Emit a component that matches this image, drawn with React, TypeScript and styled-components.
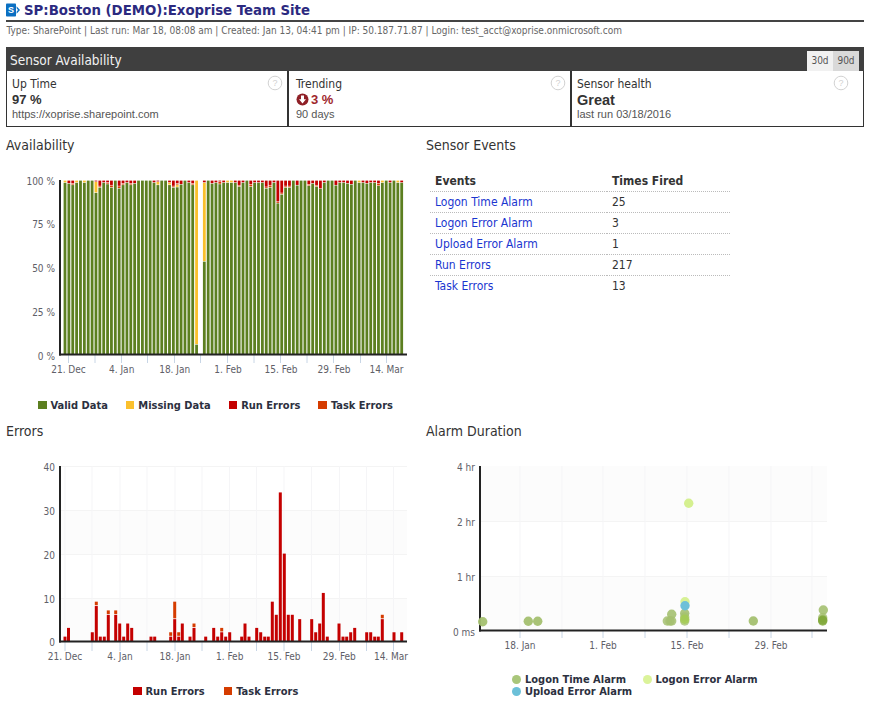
import React from "react";
import styled, { createGlobalStyle } from "styled-components";

const Global = createGlobalStyle`
  html, body { margin: 0; padding: 0; background: #fff; }
  body { font-family: "DejaVu Sans Condensed", "DejaVu Sans", Verdana, sans-serif; color: #333; }
`;
const Page = styled.div`
  width: 858px;
  margin-left: 6px;
  display: flex;
  flex-direction: column;
`;
const TitleBar = styled.header`
  height: 20px;
  display: flex;
  align-items: center;
  gap: 4px;
  border-bottom: 2px solid #444;
`;
const Title = styled.h1`
  margin: 0;
  font-size: 14.8px;
  font-weight: 700;
  line-height: 20px;
  color: #2c2a80;
`;
const Meta = styled.div`
  height: 25px;
  line-height: 17px;
  font-size: 10px;
  color: #666;
  padding-left: 0.5px;
`;
const PanelHead = styled.div`
  height: 24px;
  background: #3f3f3f;
  display: flex;
  align-items: flex-start;
  justify-content: space-between;
  padding: 0 5px 0 4px;
`;
const PanelTitle = styled.div`
  font-size: 13.5px;
  line-height: 27px;
  color: #f2f2f2;
`;
const Toggle = styled.div`
  display: flex;
  margin-top: 4px;
`;
const ToggleBtn = styled.div<{ $active?: boolean }>`
  width: 26px;
  height: 20px;
  font-size: 10px;
  line-height: 20px;
  text-align: center;
  color: #555;
  background: ${(p) => (p.$active ? "#d9d9d9" : "#f1f1f1")};
`;
const Cards = styled.div`
  display: grid;
  grid-template-columns: 282px 283px 1fr;
  height: 56px;
  border: 1px solid #333;
  border-top: 0;
  margin-bottom: 8px;
  box-sizing: border-box;
`;
const Card = styled.div<{ $last?: boolean; $pad?: number }>`
  position: relative;
  padding: 5px 0 0 ${(p) => p.$pad ?? 5}px;
  border-right: ${(p) => (p.$last ? "0" : "2px solid #333")};
`;
const CardLabel = styled.div`
  font-size: 12px;
  line-height: 16px;
  color: #333;
`;
const CardValue = styled.div<{ $tone?: string; $big?: boolean }>`
  display: flex;
  align-items: center;
  gap: 2px;
  height: 15px;
  font-family: "Liberation Sans", Arial, sans-serif;
  font-weight: 700;
  font-size: ${(p) => (p.$big ? "14.5px" : "13px")};
  color: ${(p) => p.$tone || "#333"};
`;
const CardNote = styled.div`
  font-family: "Liberation Sans", Arial, sans-serif;
  font-size: 11px;
  line-height: 15px;
  color: #555;
`;
const Help = styled.svg<{ $inset?: number }>`
  position: absolute;
  top: 4px;
  right: ${(p) => p.$inset ?? 4}px;
  width: 16px;
  height: 16px;
`;
const Row = styled.section<{ $gap?: number }>`
  display: grid;
  grid-template-columns: 420px 438px;
  margin-top: ${(p) => p.$gap ?? 0}px;
`;
const Column = styled.div`
  display: flex;
  flex-direction: column;
  min-width: 0;
`;
const SectionTitle = styled.h2`
  margin: 0;
  height: 25px;
  font-size: 14px;
  line-height: 20px;
  font-weight: 400;
  color: #333;
`;
const ChartSvg = styled.svg`
  display: block;
`;
const AxisText = styled.text`
  font-size: 10px;
  fill: #606068;
`;
const Legend = styled.div<{ $pad: number; $gap: number; $h: number }>`
  display: flex;
  gap: ${(p) => p.$gap}px;
  padding-left: ${(p) => p.$pad}px;
  height: ${(p) => p.$h}px;
  align-items: center;
`;
const LegendGrid = styled.div`
  display: grid;
  grid-template-columns: 130.5px 1fr;
  grid-auto-rows: 12px;
  padding-left: 86px;
  height: 24px;
`;
const LegendItem = styled.div`
  display: flex;
  align-items: center;
  gap: 4px;
  font-size: 11px;
  font-weight: 700;
  color: #2c3040;
  white-space: nowrap;
`;
const Swatch = styled.span<{ $color: string; $round?: boolean }>`
  flex: none;
  width: ${(p) => (p.$round ? 9 : 8.5)}px;
  height: ${(p) => (p.$round ? 9 : 8.5)}px;
  background: ${(p) => p.$color};
  border-radius: ${(p) => (p.$round ? "50%" : "0")};
`;
const EventsTable = styled.table`
  margin: 11px 0 0 4px;
  width: 300px;
  border-collapse: collapse;
  font-size: 12px;
  table-layout: fixed;
`;
const Th = styled.th<{ $w?: number }>`
  height: 20px;
  padding: 0 0 0 5px;
  text-align: left;
  font-weight: 700;
  color: #333;
  border-bottom: 1px dotted #bbb;
  width: ${(p) => (p.$w ? `${p.$w}px` : "auto")};
`;
const Td = styled.td<{ $last?: boolean }>`
  height: 20px;
  padding: 0 0 0 5px;
  color: #333;
  border-bottom: ${(p) => (p.$last ? "0" : "1px dotted #bbb")};
`;
const EventLink = styled.a`
  color: #1a36d0;
  text-decoration: none;
`;

const GREEN = "#5c7f20";
const YELLOW = "#fbc02d";
const RED = "#c40000";
const ORANGE = "#d53c00";

const px = (i: number) => 65 + i * 3.87;

// index -> [missing, task, run] percent
const avail: Record<number, [number, number, number]> = {
  0: [1, 0, 0], 1: [0, 0, 1.5], 2: [0, 0.5, 1.5], 3: [1, 0, 0], 5: [1, 0, 0],
  8: [6, 0, 0.5], 9: [0, 0.5, 3], 10: [0, 0, 1], 11: [0, 0.5, 1], 12: [0, 1, 2.5],
  14: [0, 1, 3], 15: [0, 0.5, 1.5], 16: [0, 0, 1], 17: [0, 0.5, 1.5], 18: [0, 0, 1.5],
  23: [0, 0, 1], 24: [1.5, 0, 0.5], 27: [1, 0, 1], 28: [0, 0.5, 3], 29: [1, 0.5, 1.5],
  30: [0, 0, 2], 32: [0, 0, 1], 33: [0, 0.5, 1.5], 34: [94, 0, 0], 36: [45, 0, 1],
  38: [0, 0, 1.5], 39: [0, 0, 1], 40: [0, 1, 0.5], 41: [0, 0, 1], 42: [1, 0, 0], 43: [1, 0, 0],
  44: [0, 0, 1], 45: [0, 0.5, 2.5], 46: [0, 0, 1], 48: [0, 1, 2], 49: [0, 0, 1], 50: [0, 0, 1],
  51: [0, 0, 1], 52: [0, 0.5, 3.5], 53: [0, 1, 2.5], 54: [0, 0, 1], 55: [0, 0.5, 12], 56: [0, 0.5, 7],
  57: [0, 0.5, 3], 58: [0, 0.5, 3], 60: [0, 0, 2.5], 63: [0, 0.5, 2], 64: [0, 0, 1.5], 65: [0, 0.5, 2.5],
  66: [0, 0, 4.5], 67: [0, 0, 1], 70: [0, 0, 2.5], 71: [0, 0, 1], 72: [0, 0, 1], 73: [0, 0, 1.5],
  74: [0, 0, 2], 76: [1, 0, 0], 77: [0, 0, 1], 78: [0, 0, 1.5], 79: [0, 0, 1], 80: [0, 0, 1],
  81: [0, 1, 1.5], 82: [1, 0, 0], 84: [0, 0, 1], 86: [1, 0, 0], 87: [0, 0, 1],
};
const empty35 = 35;

const errorBars: [number, number, number][] = [
  [65, 1, 0], [68.5, 3, 0], [92.3, 2, 0], [96.3, 8, 1], [100.3, 1, 0], [104.3, 1, 0], [108.3, 6, 1],
  [115.7, 6, 1], [119.7, 4, 0], [123.7, 1, 0], [127.7, 4, 0], [131.7, 3, 0], [151, 1, 0], [154.7, 1, 0],
  [170.7, 1, 1], [174.7, 5, 4], [178.7, 1, 1], [182.3, 4, 0], [190, 1, 0], [194, 3, 1], [205.7, 1, 0],
  [213.7, 3, 0], [217.7, 1, 0], [221.7, 2, 1], [225.7, 1, 0], [229.7, 2, 0], [241.7, 1, 0], [245, 4, 0],
  [249, 1, 0], [256.7, 3, 0], [260.7, 2, 0], [264.7, 1, 0], [268.3, 1, 0], [272.3, 9, 0], [276.3, 6, 0],
  [280.3, 34, 0], [284.3, 20, 0], [288.3, 6, 0], [292.3, 6, 0], [299.7, 5, 0], [311.7, 5, 0], [315.7, 2, 0],
  [319.7, 4, 0], [323.3, 11, 0], [327.3, 1, 0], [339, 4, 0], [343, 1, 0], [346.7, 1, 0], [350.7, 2, 0],
  [354.7, 3, 0], [366.7, 2, 0], [370.7, 2, 0], [374.7, 1, 0], [378.3, 1, 0], [382.3, 5, 1], [394, 2, 0],
  [401.7, 2, 0],
];

const OLIVE = "#a4c070";
const LIME = "#d3ef8a";
const BLUE = "#6cc0d8";
const dots: [number, number, string, number][] = [
  [482.7, 620.7, OLIVE, 0.95], [528.3, 620.3, OLIVE, 0.95], [537.7, 620.3, OLIVE, 0.95],
  [688.7, 502.3, LIME, 0.95],
  [685, 600.7, LIME, 0.9], [684.7, 612.3, OLIVE, 0.9], [684.7, 616, OLIVE, 0.8], [684.7, 620, OLIVE, 0.8],
  [684.7, 618.3, "#a4cc50", 0.8], [685, 604.7, BLUE, 1],
  [671.7, 613.3, OLIVE, 0.9], [667.3, 620, OLIVE, 0.85], [670, 620, OLIVE, 0.85], [671.7, 620, OLIVE, 0.85],
  [753.3, 620, OLIVE, 0.95],
  [823.3, 609, OLIVE, 0.9], [822.7, 616.7, OLIVE, 0.85], [822.7, 619, "#80a838", 0.8], [822.7, 620, "#80a838", 0.8],
];

const Axis = ({ x0, x1, yTop, yBase }: { x0: number; x1: number; yTop: number; yBase: number }) => (
  <>
    <line x1={x0} y1={yTop} x2={x0} y2={yBase + 1} stroke="#222" strokeWidth="2" />
    <line x1={x0 - 1} y1={yBase} x2={x1} y2={yBase} stroke="#222" strokeWidth="2" />
  </>
);

const Ticks = ({ xs, yBase, len, grid }: { xs: number[]; yBase: number; len: number; grid: number }) => (
  <>
    {xs.map((x) => (
      <g key={x}>
        <line x1={x} y1={grid} x2={x} y2={yBase} stroke="#f5f5f7" strokeWidth="1" />
        <line x1={x} y1={yBase + 1} x2={x} y2={yBase + len} stroke="#c8d6e6" strokeWidth="1" />
      </g>
    ))}
  </>
);

const AvailabilityChart = () => {
  const h = 1.74;
  const top = 180;
  const ticks = [68.5, 95, 121.5, 147.5, 174.5, 200.5, 227.5, 254, 280.5, 307, 333.5, 360.5, 386.5];
  const labels: [number, string][] = [
    [68.5, "21. Dec"], [121.7, "4. Jan"], [174.7, "18. Jan"], [228, "1. Feb"], [281, "15. Feb"], [334, "29. Feb"], [386.5, "14. Mar"],
  ];
  return (
    <ChartSvg width="420" height="238" viewBox="6 160 420 238">
      {Array.from({ length: 88 }, (_, i) => {
        if (i === empty35) return null;
        const [m, t, r] = avail[i] || [0, 0, 0];
        const x = px(i) - 1.4;
        let y = top + 0.6;
        const seg = (v: number, c: string) => {
          if (!v) return null;
          const el = <rect key={c} x={x} y={y} width="2.8" height={v * h} fill={c} />;
          y += v * h + 0.5;
          return el;
        };
        const a = seg(r, RED);
        const b = seg(t, ORANGE);
        const c = seg(m, YELLOW);
        return (
          <g key={i}>
            {a}
            {b}
            {c}
            <rect x={x} y={y} width="2.8" height={354 - y} fill={GREEN} />
          </g>
        );
      })}
      <Ticks xs={ticks} yBase={354} len={9} grid={354} />
      <Axis x0={60} x1={407} yTop={180} yBase={354.5} />
      {[["100 %", 185], ["75 %", 228], ["50 %", 272], ["25 %", 316], ["0 %", 360]].map(([t, y]) => (
        <AxisText key={t} x="55" y={y} textAnchor="end">{t}</AxisText>
      ))}
      {labels.map(([x, t]) => (
        <AxisText key={t} x={x} y="373" textAnchor="middle">{t}</AxisText>
      ))}
    </ChartSvg>
  );
};

const ErrorsChart = () => {
  const u = 4.37;
  const base = 640;
  const ticks = [65, 92, 120, 147, 175, 202, 229.5, 256.5, 284, 311.5, 339.5, 366.5, 393.5];
  const labels: [number, string][] = [
    [65, "21. Dec"], [120, "4. Jan"], [175, "18. Jan"], [229.7, "1. Feb"], [284, "15. Feb"], [339.3, "29. Feb"], [391, "14. Mar"],
  ];
  return (
    <ChartSvg width="420" height="238" viewBox="6 445 420 238">
      <rect x="60" y="509" width="347" height="44" fill="#fcfcfc" />
      <rect x="60" y="597" width="347" height="43" fill="#fcfcfc" />
      {[465, 509, 553, 597].map((y) => (
        <line key={y} x1="60" x2="407" y1={y + 0.5} y2={y + 0.5} stroke="#f4f4f4" />
      ))}
      <Ticks xs={ticks} yBase={640} len={10} grid={465} />
      {errorBars.map(([x, r, t]) => (
        <g key={x}>
          <rect x={x - 1.5} y={base - r * u} width="3" height={r * u} fill={RED} />
          {t > 0 && (
            <rect x={x - 1.5} y={base - r * u - t * u} width="3" height={t * u - 0.8} fill={ORANGE} />
          )}
        </g>
      ))}
      <Axis x0={60} x1={407} yTop={465} yBase={640.5} />
      {[["40", 470], ["30", 514], ["20", 558], ["10", 602], ["0", 645]].map(([t, y]) => (
        <AxisText key={t} x="55" y={y} textAnchor="end">{t}</AxisText>
      ))}
      {labels.map(([x, t]) => (
        <AxisText key={t} x={x} y="659" textAnchor="middle">{t}</AxisText>
      ))}
    </ChartSvg>
  );
};

const AlarmChart = () => {
  const ticks = [520, 562, 603, 645, 687, 729, 771, 812];
  return (
    <ChartSvg width="438" height="227" viewBox="426 445 438 227">
      <rect x="480" y="465" width="347" height="55" fill="#fcfcfc" />
      <rect x="480" y="575" width="347" height="54" fill="#fcfcfc" />
      {[520, 575].map((y) => (
        <line key={y} x1="480" x2="827" y1={y + 0.5} y2={y + 0.5} stroke="#f4f4f4" />
      ))}
      <Ticks xs={ticks} yBase={629} len={8} grid={465} />
      <Axis x0={480} x1={827} yTop={465} yBase={629.5} />
      {dots.map(([x, y, c, o], i) => (
        <circle key={i} cx={x} cy={y} r="4.7" fill={c} opacity={o} />
      ))}
      {[["4 hr", 470], ["2 hr", 525], ["1 hr", 580], ["0 ms", 635]].map(([t, y]) => (
        <AxisText key={t} x="475" y={y} textAnchor="end">{t}</AxisText>
      ))}
      {[[520, "18. Jan"], [603, "1. Feb"], [687, "15. Feb"], [771, "29. Feb"]].map(([x, t]) => (
        <AxisText key={t} x={x} y="648" textAnchor="middle">{t}</AxisText>
      ))}
    </ChartSvg>
  );
};

const HelpIcon = ({ inset }: { inset?: number }) => (
  <Help viewBox="0 0 16 16" $inset={inset}>
    <circle cx="8" cy="8" r="6.8" fill="none" stroke="#d2d2d2" strokeWidth="1" />
    <text x="8" y="11.3" textAnchor="middle" fontSize="9" fill="#d2d2d2" fontFamily="Liberation Sans, sans-serif">?</text>
  </Help>
);

const SpLogo = () => (
  <svg width="14" height="14" viewBox="0 0 14 14">
    <rect x="0" y="0.5" width="10" height="13" rx="0.8" fill="#0a6fc2" />
    <text x="4.9" y="10.2" textAnchor="middle" fontSize="9" fontWeight="700" fill="#fff" fontFamily="Liberation Sans, sans-serif">S</text>
    <path d="M10.6 3.2 L14 7 L10.6 10.8 L10.6 8.8 L12 7 L10.6 5.2 Z" fill="#0a6fc2" />
  </svg>
);

const DownIcon = () => (
  <svg width="13" height="13" viewBox="0 0 13 13">
    <circle cx="6.5" cy="6.5" r="6" fill="#8f2027" />
    <path d="M5 2.6 H8 V6.2 H10 L6.5 10.4 L3 6.2 H5 Z" fill="#fff" />
  </svg>
);

const events: [string, string][] = [
  ["Logon Time Alarm", "25"],
  ["Logon Error Alarm", "3"],
  ["Upload Error Alarm", "1"],
  ["Run Errors", "217"],
  ["Task Errors", "13"],
];

export default function App() {
  return (
    <Page>
      <Global />
      <TitleBar>
        <SpLogo />
        <Title>SP:Boston (DEMO):Exoprise Team Site</Title>
      </TitleBar>
      <Meta>Type: SharePoint | Last run: Mar 18, 08:08 am | Created: Jan 13, 04:41 pm | IP: 50.187.71.87 | Login: test_acct@xoprise.onmicrosoft.com</Meta>
      <PanelHead>
        <PanelTitle>Sensor Availability</PanelTitle>
        <Toggle>
          <ToggleBtn>30d</ToggleBtn>
          <ToggleBtn $active>90d</ToggleBtn>
        </Toggle>
      </PanelHead>
      <Cards>
        <Card>
          <CardLabel>Up Time</CardLabel>
          <CardValue>97 %</CardValue>
          <CardNote>https://xoprise.sharepoint.com</CardNote>
          <HelpIcon />
        </Card>
        <Card $pad={7}>
          <CardLabel>Trending</CardLabel>
          <CardValue $tone="#a0262c"><DownIcon />3 %</CardValue>
          <CardNote>90 days</CardNote>
          <HelpIcon />
        </Card>
        <Card $last>
          <CardLabel>Sensor health</CardLabel>
          <CardValue $big>Great</CardValue>
          <CardNote>last run 03/18/2016</CardNote>
          <HelpIcon inset={14} />
        </Card>
      </Cards>
      <Row>
        <Column>
          <SectionTitle>Availability</SectionTitle>
          <AvailabilityChart />
          <Legend $pad={32} $gap={18} $h={14}>
            <LegendItem><Swatch $color={GREEN} />Valid Data</LegendItem>
            <LegendItem><Swatch $color={YELLOW} />Missing Data</LegendItem>
            <LegendItem><Swatch $color={RED} />Run Errors</LegendItem>
            <LegendItem><Swatch $color={ORANGE} />Task Errors</LegendItem>
          </Legend>
        </Column>
        <Column>
          <SectionTitle>Sensor Events</SectionTitle>
          <EventsTable>
            <thead>
              <tr>
                <Th $w={172}>Events</Th>
                <Th>Times Fired</Th>
              </tr>
            </thead>
            <tbody>
              {events.map(([name, n], i) => (
                <tr key={name}>
                  <Td $last={i === events.length - 1}><EventLink href="#">{name}</EventLink></Td>
                  <Td $last={i === events.length - 1}>{n}</Td>
                </tr>
              ))}
            </tbody>
          </EventsTable>
        </Column>
      </Row>
      <Row $gap={9}>
        <Column>
          <SectionTitle>Errors</SectionTitle>
          <ErrorsChart />
          <Legend $pad={127} $gap={19} $h={14}>
            <LegendItem><Swatch $color={RED} />Run Errors</LegendItem>
            <LegendItem><Swatch $color={ORANGE} />Task Errors</LegendItem>
          </Legend>
        </Column>
        <Column>
          <SectionTitle>Alarm Duration</SectionTitle>
          <AlarmChart />
          <LegendGrid>
            <LegendItem><Swatch $round $color="#a9c67a" />Logon Time Alarm</LegendItem>
            <LegendItem><Swatch $round $color="#dbf39a" />Logon Error Alarm</LegendItem>
            <LegendItem><Swatch $round $color="#6cc0d8" />Upload Error Alarm</LegendItem>
          </LegendGrid>
        </Column>
      </Row>
    </Page>
  );
}
